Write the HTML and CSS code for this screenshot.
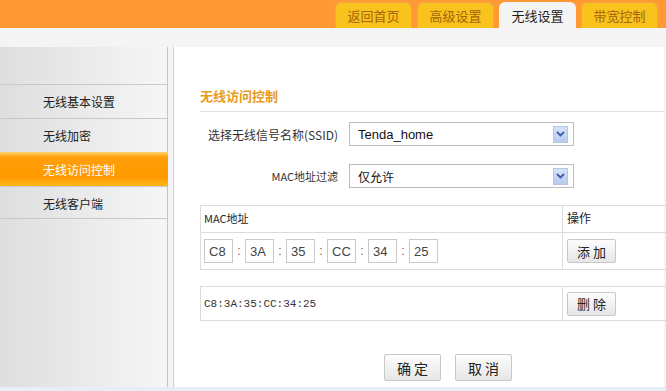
FILE: index.html
```html
<!DOCTYPE html>
<html>
<head>
<meta charset="utf-8">
<link rel="stylesheet" href="styles.css">
</head>
<body>
<div class="page">
  <div class="header">
    <nav class="tabs">
      <a class="tab">返回首页</a>
      <a class="tab">高级设置</a>
      <a class="tab active">无线设置</a>
      <a class="tab">带宽控制</a>
    </nav>
  </div>
  <div class="band"></div>
  <div class="main">
    <aside class="sidebar">
      <ul class="menu">
        <li class="item">无线基本设置</li>
        <li class="item">无线加密</li>
        <li class="item current">无线访问控制</li>
        <li class="item">无线客户端</li>
      </ul>
    </aside>
    <section class="content">
      <h2 class="title">无线访问控制</h2>
      <div class="form-row">
        <label class="label">选择无线信号名称(SSID)</label>
        <div class="select"><span class="select-text">Tenda_home</span><span class="arrow"><svg width="9" height="6" viewBox="0 0 9 6"><path d="M1 1 L4.5 4.5 L8 1" fill="none" stroke="#3a5fa8" stroke-width="1.8"/></svg></span></div>
      </div>
      <div class="form-row">
        <label class="label small">MAC地址过滤</label>
        <div class="select"><span class="select-text cjk">仅允许</span><span class="arrow"><svg width="9" height="6" viewBox="0 0 9 6"><path d="M1 1 L4.5 4.5 L8 1" fill="none" stroke="#3a5fa8" stroke-width="1.8"/></svg></span></div>
      </div>
      <div class="table">
        <div class="cell head small">MAC地址</div>
        <div class="cell head op">操作</div>
        <div class="cell mac-inputs">
          <span class="box">C8</span><span class="colon">:</span>
          <span class="box">3A</span><span class="colon">:</span>
          <span class="box">35</span><span class="colon">:</span>
          <span class="box">CC</span><span class="colon">:</span>
          <span class="box">34</span><span class="colon">:</span>
          <span class="box">25</span>
        </div>
        <div class="cell op body">
          <button class="btn">添 加</button>
        </div>
      </div>
      <div class="table list">
        <div class="cell mono">C8:3A:35:CC:34:25</div>
        <div class="cell op">
          <button class="btn">删 除</button>
        </div>
      </div>
      <div class="actions">
        <button class="btn big">确 定</button>
        <button class="btn big">取 消</button>
      </div>
    </section>
  </div>
  <div class="footer"></div>
</div>
</body>
</html>
```
FILE: styles.css
```css
* { box-sizing: border-box; }
html, body { margin: 0; padding: 0; }
body {
  width: 666px; height: 391px; overflow: hidden;
  background: #f4f4f4;
  font-family: "SimSun", "Noto Sans CJK SC", "Liberation Sans", sans-serif;
  font-size: 12px; color: #222;
}
.page { display: flex; flex-direction: column; height: 391px; }
.header {
  height: 28px; background: #ff9933; flex: none;
  display: flex; justify-content: flex-end; align-items: flex-end;
  padding-right: 8px;
}
.tabs { display: flex; gap: 5px; }
.tab {
  width: 77px; height: 26px;
  display: flex; align-items: center; justify-content: center;
  background: #f9c21d; color: #a5650a;
  border: 1px solid #f0a84a; border-bottom: none;
  border-radius: 6px 6px 0 0;
  font-size: 13px;
}
.tab.active { background: #f4f4f4; color: #1e1e1e; border-color: #f4f4f4; }
.band { height: 19px; background: #f4f4f4; flex: none; }
.main { display: flex; flex: 1; min-height: 0; overflow: hidden; gap: 5px; }
.sidebar {
  width: 168px;
  background: linear-gradient(to right, #dedede, #f6f6f6);
  border-right: 1px solid #c4c4c4;
  padding-top: 37px;
}
.menu { list-style: none; margin: 0; padding: 0; }
.item {
  height: 34px; line-height: 33px;
  padding-left: 43px;
  border-top: 1px solid #c8c8c8;
  color: #222;
}
.item:last-child { border-bottom: 1px solid #c8c8c8; height: 33px; }
.item.current {
  background: linear-gradient(to bottom, #ffcb5a 0px, #ff9f0a 4px, #ff9a00 24px, #ffbb1e 34px);
  color: #fff; border-top-color: #ffd06a;
  margin-right: -1px;
}
.content {
  width: 491px; background: #fff;
  border-left: 1px solid #cfcfcf;
  padding: 40px 0 0 26px;
}
.title {
  margin: 0; font-size: 13px; font-weight: bold; color: #e89b1c;
  height: 25px; line-height: 18px;
  border-bottom: 1px solid #dedede;
}
.form-row { display: flex; align-items: center; margin-top: 10px; height: 24px; }
.form-row + .form-row { margin-top: 18px; }
.label { width: 138px; text-align: right; color: #333; font-size: 12px; }
.small { font-size: 11px; }
.select {
  margin-left: 11px; width: 225px; height: 24px;
  border: 1px solid #bdbdbd; background: #fff;
  display: flex; align-items: center; justify-content: space-between;
  padding: 0 5px 0 8px;
}
.select-text { font-family: "Liberation Sans", "Noto Sans CJK SC", sans-serif; font-size: 13px; color: #111; }
.select-text.cjk { font-family: "Noto Sans CJK SC", sans-serif; font-size: 12px; }
.arrow {
  width: 15px; height: 17px;
  background: linear-gradient(#d6e2f7, #b7cbee);
  border: 1px solid #b5c6e5;
  display: flex; align-items: center; justify-content: center;
}
.table {
  display: grid; grid-template-columns: 362px 1fr;
  border-top: 1px solid #dcdcdc; border-bottom: 1px solid #dcdcdc;
  margin-top: 17px; margin-right: -3px;
}
.cell { padding-left: 3px; border-left: 1px solid #dcdcdc; }
.cell.op { padding-left: 4px; }
.cell.head { height: 27px; line-height: 24px; border-bottom: 1px solid #dcdcdc; }
.mac-inputs { height: 36px; display: flex; align-items: center; }
.cell.body { height: 36px; display: flex; align-items: center; }
.box {
  width: 29px; height: 24px; border: 1px solid #c9c9c9;
  display: inline-flex; align-items: center; padding-left: 4px;
  font-family: "Liberation Sans", sans-serif; font-size: 13px; color: #444;
}
.colon { width: 12px; text-align: center; color: #666; font-family: "Liberation Sans", sans-serif; }
.btn {
  font-family: inherit; font-size: 13px; color: #222;
  width: 49px; height: 24px;
  border: 1px solid #c8c8c8; border-radius: 2px;
  background: linear-gradient(#fdfdfd, #e6e6e6);
  padding: 0;
}
.list { margin-top: 16px; }
.list .cell { height: 33px; display: flex; align-items: center; }
.mono { font-family: "Liberation Mono", monospace; font-size: 11px; color: #333; }
.actions { display: flex; gap: 14px; margin-top: 33px; padding-left: 184px; }
.btn.big { width: 57px; height: 27px; font-size: 14px; }
.footer { height: 4px; background: #e8eef8; flex: none; }
```
